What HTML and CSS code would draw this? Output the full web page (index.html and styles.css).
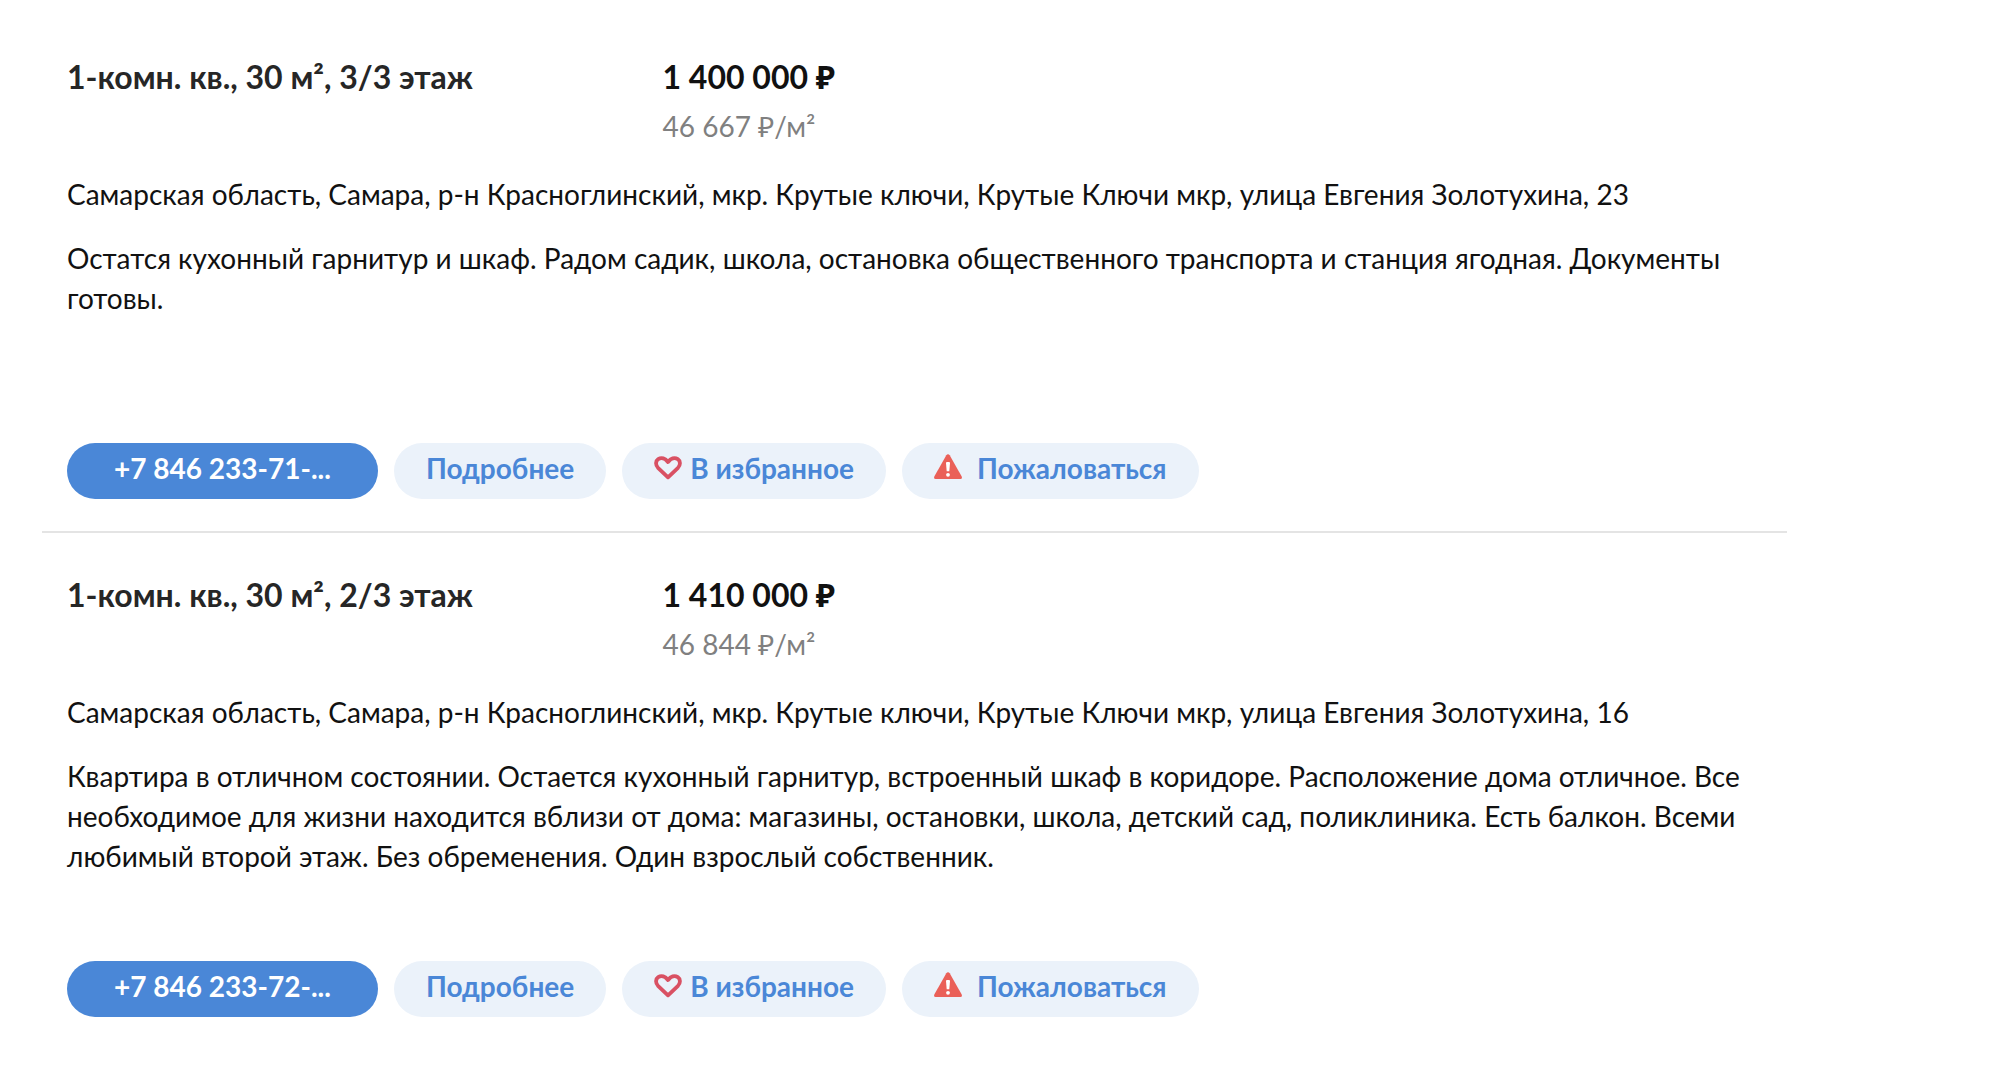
FILE: index.html
```html
<!DOCTYPE html>
<html lang="ru">
<head>
  <meta charset="UTF-8">
  <meta name="viewport" content="width=device-width, initial-scale=1.0">
  <title>Квартиры в Самаре</title>
  <link rel="stylesheet" href="styles.css">
</head>
<body>
  <!-- Контуры иконок, общие для всех карточек -->
  <svg class="sprite" aria-hidden="true">
    <symbol id="icon-heart" viewBox="0 0 28 24">
      <path d="M14 21.300 4 11.800C1.300 9 1.500 5 4.200 3.200 7.500 1 11.200 2.300 14 6 16.800 2.300 20.500 1 23.800 3.200 26.500 5 26.700 9 24 11.800Z" fill="none" stroke="#d95163" stroke-width="3.800" stroke-linejoin="round"/>
    </symbol>
    <symbol id="icon-warning" viewBox="0 0 28 25">
      <path d="M12.300 1.300Q14-1 15.700 1.300L27.700 22.500Q28.500 25 26.500 25H1.500Q-.5 25 .3 22.500Z" fill="#ea6058"/>
      <path d="M12 9Q12 8 13 8h2q1 0 1 1l-.7 8.300h-2.600Z" fill="#fff"/>
      <circle cx="14" cy="20.800" r="1.900" fill="#fff"/>
    </symbol>
  </svg>

  <main class="offers">
    <article class="offer">
      <div class="offer-head">
        <h2 class="offer-title">1-комн. кв., 30 м², 3/3 этаж</h2>
        <div class="offer-price">
          <div class="price">1 400 000 ₽</div>
          <div class="price-meter">46 667 ₽/м²</div>
        </div>
      </div>
      <p class="address">Самарская область, Самара, р-н Красноглинский, мкр. Крутые ключи, Крутые Ключи мкр, улица Евгения Золотухина, 23</p>
      <p class="description">Остатся кухонный гарнитур и шкаф. Радом садик, школа, остановка общественного транспорта и станция ягодная. Документы готовы.</p>
      <div class="actions">
        <button type="button" class="btn btn-phone">+7 846 233-71-...</button>
        <button type="button" class="btn">Подробнее</button>
        <button type="button" class="btn btn-favorite"><svg class="icon"><use href="#icon-heart"/></svg>В избранное</button>
        <button type="button" class="btn btn-report"><svg class="icon"><use href="#icon-warning"/></svg>Пожаловаться</button>
      </div>
    </article>

    <article class="offer">
      <div class="offer-head">
        <h2 class="offer-title">1-комн. кв., 30 м², 2/3 этаж</h2>
        <div class="offer-price">
          <div class="price">1 410 000 ₽</div>
          <div class="price-meter">46 844 ₽/м²</div>
        </div>
      </div>
      <p class="address">Самарская область, Самара, р-н Красноглинский, мкр. Крутые ключи, Крутые Ключи мкр, улица Евгения Золотухина, 16</p>
      <p class="description">Квартира в отличном состоянии. Остается кухонный гарнитур, встроенный шкаф в коридоре. Расположение дома отличное. Все необходимое для жизни находится вблизи от дома: магазины, остановки, школа, детский сад, поликлиника. Есть балкон. Всеми любимый второй этаж. Без обременения. Один взрослый собственник.</p>
      <div class="actions">
        <button type="button" class="btn btn-phone">+7 846 233-72-...</button>
        <button type="button" class="btn">Подробнее</button>
        <button type="button" class="btn btn-favorite"><svg class="icon"><use href="#icon-heart"/></svg>В избранное</button>
        <button type="button" class="btn btn-report"><svg class="icon"><use href="#icon-warning"/></svg>Пожаловаться</button>
      </div>
    </article>
  </main>
</body>
</html>
```

FILE: styles.css
```css
* {
  box-sizing: border-box;
}
body {
  margin: 0;
  background: #fff;
  color: #111;
  font-family: Lato, "Noto Sans", sans-serif;
  font-size: 28px;
  line-height: 40px;
}
.sprite {
  display: none;
}

/* Список объявлений */
.offers {
  margin: 0 213px 0 42px;
  padding-top: 15px;
}
.offer {
  padding: 38px 25px 32px;
}
.offer + .offer {
  border-top: 2px solid #e4e4e4;
}

/* Заголовок и цена */
.offer-head {
  display: grid;
  grid-template-columns: 13fr 24fr;
}
.offer-title,
.price {
  margin: 0;
  font-size: 32px;
  font-weight: 700;
  line-height: 48px;
}
.offer-title {
  color: #262626;
}
.price-meter {
  margin-top: 5px;
  color: #808080;
}

.address {
  margin: 28px 0 0;
}
/* Место под три строки текста */
.description {
  min-height: 120px;
  margin: 24px 0 0;
}

/* Кнопки действий */
.actions {
  display: flex;
  flex-wrap: wrap;
  gap: 16px;
  margin-top: 85px;
}
.btn {
  display: flex;
  align-items: center;
  height: 56px;
  padding: 0 32px 6px;
  border: none;
  border-radius: 28px;
  background: #ebf2fa;
  color: #4a87d7;
  font: inherit;
  font-weight: 700;
  cursor: pointer;
}
.btn-phone {
  justify-content: center;
  width: 311px;
  background: #4a87d7;
  color: #fff;
}
.icon {
  width: 28px;
  height: 24px;
}
.btn-favorite .icon {
  margin-right: 8px;
}
.btn-report .icon {
  height: 25px;
  margin: 0 15px 4px 0;
}
```
